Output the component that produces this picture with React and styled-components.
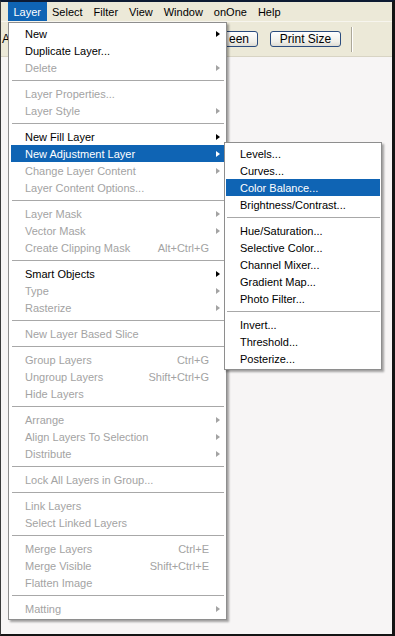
import React from "react";
import styled, { createGlobalStyle, css } from "styled-components";

const GlobalStyle = createGlobalStyle`
  html, body {
    margin: 0;
    padding: 0;
    background: #111;
  }
  * {
    box-sizing: border-box;
  }
`;

const layerMenu = [
  [
    { label: "New", sub: true },
    { label: "Duplicate Layer..." },
    { label: "Delete", sub: true, off: true },
  ],
  [
    { label: "Layer Properties...", off: true },
    { label: "Layer Style", sub: true, off: true },
  ],
  [
    { label: "New Fill Layer", sub: true },
    { label: "New Adjustment Layer", sub: true, active: true },
    { label: "Change Layer Content", sub: true, off: true },
    { label: "Layer Content Options...", off: true },
  ],
  [
    { label: "Layer Mask", sub: true, off: true },
    { label: "Vector Mask", sub: true, off: true },
    { label: "Create Clipping Mask", off: true, keys: "Alt+Ctrl+G" },
  ],
  [
    { label: "Smart Objects", sub: true },
    { label: "Type", sub: true, off: true },
    { label: "Rasterize", sub: true, off: true },
  ],
  [{ label: "New Layer Based Slice", off: true }],
  [
    { label: "Group Layers", off: true, keys: "Ctrl+G" },
    { label: "Ungroup Layers", off: true, keys: "Shift+Ctrl+G" },
    { label: "Hide Layers", off: true },
  ],
  [
    { label: "Arrange", sub: true, off: true },
    { label: "Align Layers To Selection", sub: true, off: true },
    { label: "Distribute", sub: true, off: true },
  ],
  [{ label: "Lock All Layers in Group...", off: true }],
  [
    { label: "Link Layers", off: true },
    { label: "Select Linked Layers", off: true },
  ],
  [
    { label: "Merge Layers", off: true, keys: "Ctrl+E" },
    { label: "Merge Visible", off: true, keys: "Shift+Ctrl+E" },
    { label: "Flatten Image", off: true },
  ],
  [{ label: "Matting", sub: true, off: true }],
];

const adjustMenu = [
  [
    { label: "Levels..." },
    { label: "Curves..." },
    { label: "Color Balance...", active: true },
    { label: "Brightness/Contrast..." },
  ],
  [
    { label: "Hue/Saturation..." },
    { label: "Selective Color..." },
    { label: "Channel Mixer..." },
    { label: "Gradient Map..." },
    { label: "Photo Filter..." },
  ],
  [{ label: "Invert..." }, { label: "Threshold..." }, { label: "Posterize..." }],
];

const topMenus = ["Layer", "Select", "Filter", "View", "Window", "onOne", "Help"];

const MenuList = ({ groups, children }) => (
  <>
    {groups.map((group, gi) => (
      <React.Fragment key={gi}>
        {gi > 0 && <Separator />}
        {group.map((item) => (
          <Row key={item.label} off={item.off} active={item.active}>
            <span>{item.label}</span>
            {item.keys && <Keys>{item.keys}</Keys>}
            {item.sub && <Arrow off={item.off} active={item.active} />}
            {item.active && children}
          </Row>
        ))}
      </React.Fragment>
    ))}
  </>
);

const App = () => {
  return (
    <>
      <GlobalStyle />
      <Frame>
        <MenuBar>
          {topMenus.map((m) => (
            <TopItem key={m} open={m === "Layer"}>
              {m}
            </TopItem>
          ))}
        </MenuBar>
        <Toolbar>
          <ToolLabel>A</ToolLabel>
          <ToolButton $end>een</ToolButton>
          <ToolButton>Print Size</ToolButton>
          <ToolDivider />
        </Toolbar>
        <Canvas />

        <Dropdown>
          <MenuList groups={layerMenu}>
            <Submenu>
              <MenuList groups={adjustMenu} />
            </Submenu>
          </MenuList>
        </Dropdown>
      </Frame>
    </>
  );
};

const Frame = styled.div`
  position: relative;
  width: 395px;
  height: 636px;
  overflow: hidden;
  display: flex;
  flex-direction: column;
  border-top: 2px solid #0d1b33;
  border-right: 3px solid #141414;
  border-bottom: 2px solid #141414;
  border-left: 1px solid #3a3a3a;
  font-family: "Liberation Sans", Arial, sans-serif;
  font-size: 11px;
  color: #000;
`;

const MenuBar = styled.div`
  height: 20px;
  display: flex;
  align-items: stretch;
  padding-left: 7px;
  background: #ece9d8;
  border-bottom: 1px solid #f7f5ee;
`;

const TopItem = styled.div`
  display: flex;
  align-items: center;
  padding: 0 5.5px;
  font-size: 11px;
  ${(p) =>
    p.open &&
    css`
      background: #0f64b4;
      color: #fff;
    `}
`;

const Toolbar = styled.div`
  height: 35px;
  display: flex;
  align-items: center;
  background: #ece9d8;
  border-bottom: 1px solid #d8d4c4;
  font-size: 12px;
`;

const ToolLabel = styled.div`
  width: 186px;
  padding-left: 1px;
`;

const ToolButton = styled.div`
  width: 71px;
  height: 16px;
  margin-right: 12px;
  display: flex;
  align-items: center;
  justify-content: ${(p) => (p.$end ? "flex-end" : "center")};
  padding-right: ${(p) => (p.$end ? "8px" : "0")};
  border: 1px solid #2b4c7e;
  border-radius: 3px;
  background: linear-gradient(#ffffff, #f0efe9 70%, #dedcd3);
  font-size: 12px;
`;

const ToolDivider = styled.div`
  width: 2px;
  height: 25px;
  margin-left: -2px;
  border-left: 1px solid #aca899;
  border-right: 1px solid #fff;
`;

const Canvas = styled.div`
  flex: 1;
  background: #f7f5f5;
`;

const panel = css`
  position: absolute;
  background: #fff;
  border: 1px solid #8e8e8e;
  box-shadow: 2px 2px 2px rgba(0, 0, 0, 0.35);
`;

const Dropdown = styled.div`
  ${panel}
  top: 20px;
  left: 7px;
  width: 219px;
  padding: 2px;
`;

const Submenu = styled.div`
  ${panel}
  top: -3px;
  left: 100%;
  width: 158px;
  padding: 2px 1px;
`;

const Row = styled.div`
  position: relative;
  height: 17px;
  display: flex;
  align-items: center;
  padding: 0 4px 0 14px;
  white-space: nowrap;
  color: ${(p) => (p.off ? "#a3a3a3" : "#000")};
  ${(p) =>
    p.active &&
    css`
      background: #0f64b4;
      color: #fff;
    `}
`;

const Keys = styled.span`
  margin-left: auto;
  margin-right: 11px;
`;

const Arrow = styled.span`
  margin-left: auto;
  width: 0;
  height: 0;
  border-top: 3.5px solid transparent;
  border-bottom: 3.5px solid transparent;
  border-left: 4px solid
    ${(p) => (p.active ? "#fff" : p.off ? "#a3a3a3" : "#000")};
`;

const Separator = styled.div`
  height: 1px;
  margin: 4px 0 4px 1px;
  background: #a8a8a8;
`;

export default App;
